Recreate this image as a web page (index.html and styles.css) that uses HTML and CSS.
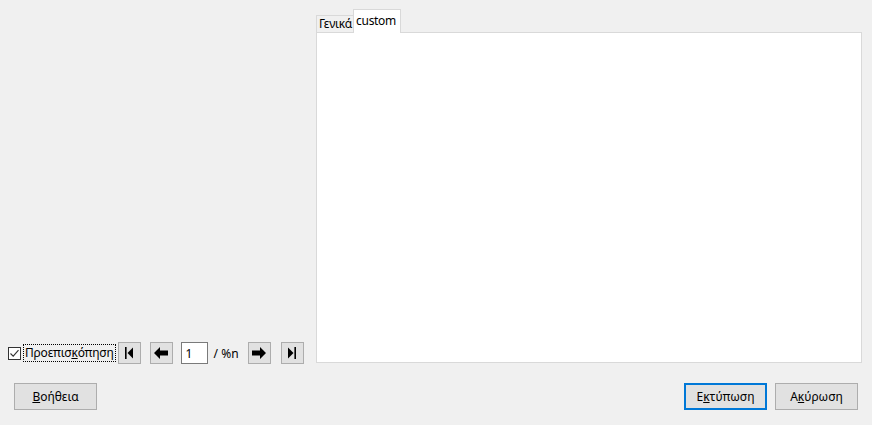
FILE: index.html
```html
<!DOCTYPE html>
<html>
<head>
<meta charset="utf-8">
<link rel="stylesheet" href="styles.css">
</head>
<body>
<div class="dialog">
  <div class="main">
    <div class="left">
      <div class="preview-row">
        <label class="check">
          <span class="box"><svg width="11" height="11" viewBox="0 0 11 11"><path d="M1.5 5.5 L4.2 8.2 L9.5 2.2" fill="none" stroke="#333" stroke-width="1.1"/></svg></span>
          <span class="check-label">Προεπισ<u>κ</u>όπηση</span>
        </label>
        <button class="nav nav-first"><svg width="12" height="14" viewBox="0 0 12 14"><rect x="2" y="1" width="1.6" height="12" fill="#000"/><path d="M4.5 7 L10 1.5 L10 12.5 Z" fill="#000"/></svg></button>
        <button class="nav nav-prev"><svg width="16" height="14" viewBox="0 0 16 14"><path d="M1 7 L7 1 L7 4.5 L15 4.5 L15 9.5 L7 9.5 L7 13 Z" fill="#000"/></svg></button>
        <input class="page" type="text" value="1">
        <span class="count">/ %n</span>
        <button class="nav nav-next"><svg width="16" height="14" viewBox="0 0 16 14"><path d="M15 7 L9 1 L9 4.5 L1 4.5 L1 9.5 L9 9.5 L9 13 Z" fill="#000"/></svg></button>
        <button class="nav nav-last"><svg width="12" height="14" viewBox="0 0 12 14"><path d="M2 1.5 L7.5 7 L2 12.5 Z" fill="#000"/><rect x="8.4" y="1" width="1.6" height="12" fill="#000"/></svg></button>
      </div>
    </div>
    <div class="tabwidget">
      <div class="tabbar">
        <div class="tab">Γενικά</div>
        <div class="tab active">custom</div>
      </div>
      <div class="panel"></div>
    </div>
  </div>
  <div class="buttons">
    <button class="btn"><u>Β</u>οήθεια</button>
    <div class="spacer"></div>
    <button class="btn default">Ε<u>κ</u>τύπωση</button>
    <button class="btn">Α<u>κ</u>ύρωση</button>
  </div>
</div>
</body>
</html>
```
FILE: styles.css
```css
html, body {
  margin: 0;
  padding: 0;
  background: #f0f0f0;
}
body {
  font-family: "Noto Sans", "DejaVu Sans", sans-serif;
  font-size: 12px;
  color: #000;
}
.dialog {
  width: 872px;
  height: 425px;
  display: flex;
  flex-direction: column;
}
.main {
  display: flex;
  padding: 8px 10px 0 8px;
  height: 355px;
}
.left {
  width: 308px;
  display: flex;
  align-items: flex-end;
}
.preview-row {
  display: flex;
  align-items: center;
  height: 22px;
  margin-bottom: -1px;
}
.check {
  display: flex;
  align-items: center;
}
.box {
  width: 11px;
  height: 11px;
  border: 1px solid #333;
  background: #fff;
  display: flex;
}
.check-label {
  margin-left: 2px;
  padding: 0 1px;
  height: 16px;
  line-height: 15px;
  border: 1px dotted #000;
  letter-spacing: -0.2px;
}
.nav {
  width: 23px;
  height: 22px;
  padding: 0;
  border: 1px solid #adadad;
  background: #e1e1e1;
  display: flex;
  align-items: center;
  justify-content: center;
}
.nav-first { margin-left: 2px; }
.nav-prev { margin-left: 9px; }
.page {
  width: 27px;
  height: 22px;
  box-sizing: border-box;
  margin-left: 8px;
  border: 1px solid #7a7a7a;
  padding: 0 4px;
  font: inherit;
  background: #fff;
}
.count {
  margin-left: 6px;
  width: 34px;
}
.nav-last { margin-left: 10px; }
.tabwidget {
  width: 546px;
  display: flex;
  flex-direction: column;
}
.tabbar {
  display: flex;
  align-items: flex-end;
  height: 24px;
}
.tab {
  height: 17px;
  line-height: 16px;
  padding: 0 1px 0 2px;
  border: 1px solid #d9d9d9;
  border-bottom: none;
  background: #f0f0f0;
  margin-bottom: -1px;
  letter-spacing: -0.3px;
}
.tab.active {
  height: 23px;
  line-height: 22px;
  background: #fff;
  padding: 0 4px 0 2px;
  position: relative;
  z-index: 1;
  margin-left: -1px;
}
.panel {
  flex: 1;
  background: #fff;
  border: 1px solid #d9d9d9;
}
.buttons {
  display: flex;
  padding: 20px 14px 0 14px;
}
.spacer { flex: 1; }
.btn {
  width: 83px;
  height: 27px;
  font: inherit;
  border: 1px solid #adadad;
  background: #e1e1e1;
  color: #000;
  padding: 0;
}
.btn.default {
  border: 2px solid #0078d7;
  margin-right: 8px;
}
```
